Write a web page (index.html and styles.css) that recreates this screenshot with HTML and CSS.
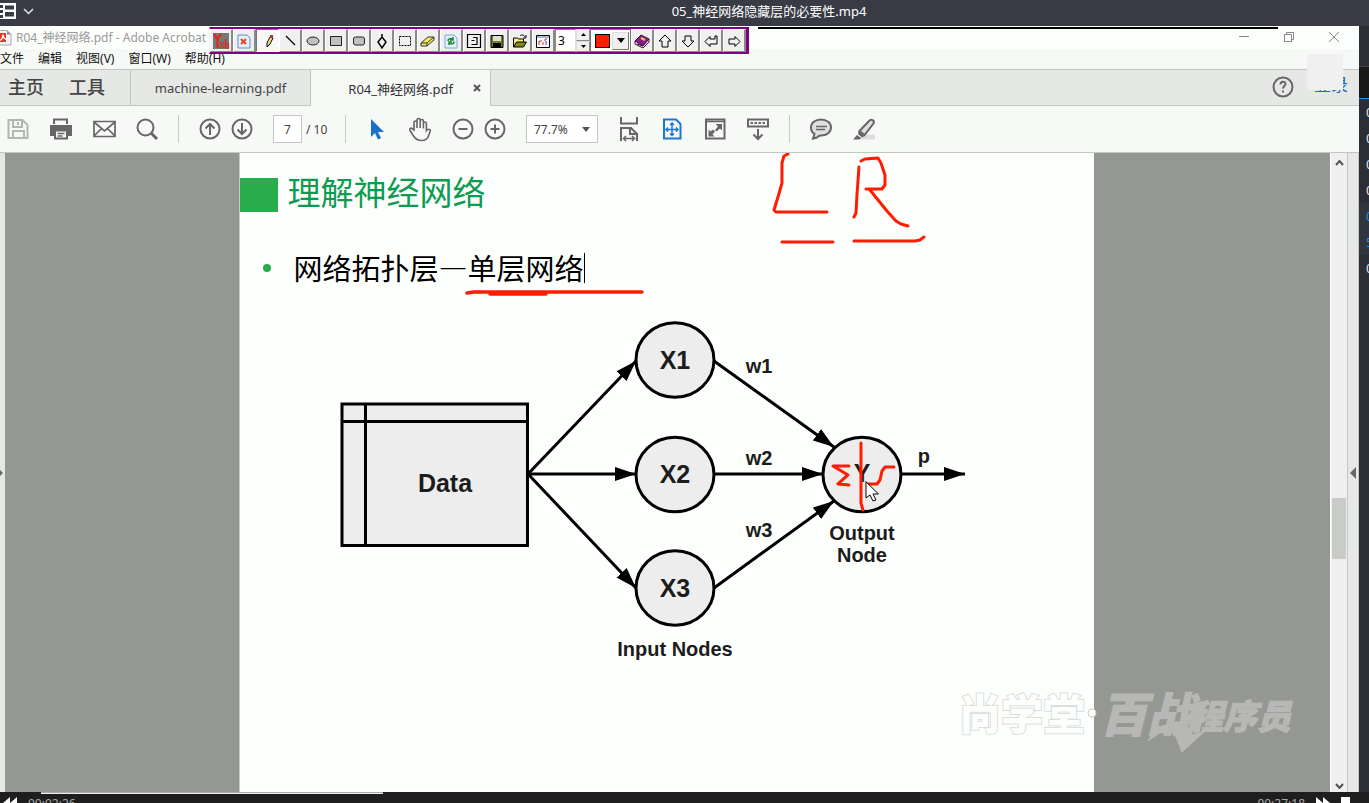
FILE: index.html
```html
<!DOCTYPE html>
<html lang="zh-CN">
<head>
<meta charset="utf-8">
<title>05_神经网络隐藏层的必要性.mp4</title>
<link rel="stylesheet" href="styles.css">
</head>
<body>
<header class="player-head">
  <button class="player-menu" aria-label="菜单">
    <svg width="34" height="18" viewBox="0 0 34 18"><path d="M0 1h16v16H0z" fill="#fff"/><path d="M-1 3h4v3h-4zM-1 8h4v3h-4zM-1 13h4v3h-4zM5 3.500h9v4H5zM5 10h9v4.500H5z" fill="#383b44"/><path d="M24 7l4.500 4.500L33 7" fill="none" stroke="#e6e6e6" stroke-width="1.500"/></svg>
  </button>
  <h1 class="player-title">05_神经网络隐藏层的必要性.mp4</h1>
</header>

<div class="stage">
  <main class="video">
    <div class="win-title">
      <svg class="pdf-icon" width="12" height="16" viewBox="0 0 12 16"><path d="M-2 .5H7l4 4V15H-2z" fill="#f4f4f4" stroke="#aaa"/><path d="M7 .5v4h4z" fill="#888"/><path d="M0 3h6v9H0z" fill="#e03a20"/><path d="M0 10.500C2.500 9 3 7 3 4.500c0 2.500 1 4 3.500 5" stroke="#fff" stroke-width="1.300"/></svg>
      <span class="win-name">R04_神经网络.pdf - Adobe Acrobat</span>
      <div class="win-buttons">
        <button aria-label="最小化"><svg width="12" height="12" viewBox="0 0 12 12"><path d="M1 5.500h10"/></svg></button>
        <button aria-label="还原"><svg width="12" height="12" viewBox="0 0 12 12"><path d="M1.500 3.500h7v7h-7zM3.500 3.500v-2h7v7h-2"/></svg></button>
        <button aria-label="关闭"><svg width="12" height="12" viewBox="0 0 12 12"><path d="M1 1l10 10M11 1L1 11"/></svg></button>
      </div>
      <span class="top-rule"></span>
    </div>

    <nav class="menus">
      <button>文件</button><button>编辑</button><button>视图(V)</button><button>窗口(W)</button><button>帮助(H)</button>
    </nav>

    <div class="tabs">
      <div class="home-tabs"><button>主页</button><button>工具</button></div>
      <button class="tab">machine-learning.pdf</button>
      <div class="tab tab-active"><button>R04_神经网络.pdf</button><button class="tab-close" aria-label="关闭标签"><svg width="8" height="8" viewBox="0 0 8 8"><path d="M1 1l6 6M7 1L1 7" stroke="#555" stroke-width="2"/></svg></button></div>
      <div class="tabs-end">
        <button class="help" aria-label="帮助"><svg width="22" height="22" viewBox="0 0 22 22" fill="none" stroke="#666" stroke-width="2"><circle cx="11" cy="11" r="9.500"/><path d="M8.500 8.500c0-3.500 5-3.500 5-.5 0 2-2.500 2-2.500 4.500M11 14.500v2"/></svg></button>
        <a class="login" href="#">登录</a>
      </div>
      <span class="patch"></span>
    </div>

    <div class="tools">
      <button aria-label="保存"><svg viewBox="0 0 24 24"><path d="M2.500 3h14l5 5v13h-19z" stroke="#b4b6b4"/><path d="M7 3v7h9V3M7 21v-7h11v7M12 5v3" stroke="#b4b6b4"/></svg></button>
      <button aria-label="打印"><svg viewBox="0 0 24 24"><path d="M5 7V2.500h13V7" /><path d="M1 8h22v11h-4v-5H5v5H1z" fill="#666" stroke="none"/><path d="M6 13.500h12v8H6z" fill="#f7f9f7"/><path d="M8.500 16.500h7M8.500 19h5" stroke-width="1.300"/></svg></button>
      <button aria-label="邮件"><svg viewBox="0 0 24 24"><path d="M2 4.500h21v15H2zM2 5l10.500 9L23 5M2 19l7.500-7.500M23 19l-7.500-7.500" stroke-width="1.700"/></svg></button>
      <button aria-label="搜索"><svg viewBox="0 0 24 24"><circle cx="10.500" cy="10.500" r="8"/><path d="M16 16l6 6" stroke-width="3"/></svg></button>
      <span class="sep"></span>
      <div class="pair">
        <button aria-label="上一页"><svg viewBox="0 0 24 24"><circle cx="12" cy="12" r="9.500"/><path d="M12 18V7M7.500 11.500L12 7l4.500 4.500"/></svg></button>
        <button aria-label="下一页"><svg viewBox="0 0 24 24"><circle cx="12" cy="12" r="9.500"/><path d="M12 6v11M7.500 12.500L12 17l4.500-4.500"/></svg></button>
      </div>
      <label class="pages"><input class="page-no" type="text" value="7" aria-label="页码"><span>/ 10</span></label>
      <span class="sep"></span>
      <button aria-label="选择"><svg viewBox="0 0 24 24"><path d="M6 2v18l4-4 3 6.500 3-1.500-3-6h6z" fill="#1a6fc9" stroke="none"/></svg></button>
      <button aria-label="手形"><svg viewBox="0 0 24 24"><path d="M6 13V5.500c0-2 3-2 3 0V11 3c0-2 3.200-2 3.200 0v8V4c0-2 3.200-2 3.200 0v7.500V6.500c0-2 3-2 3 0V13.500c1-1.500 4-2 4 .2L20.500 19c-1 3-3 4.500-7 4.500S7.500 22 5.500 19L2 13.500c-1-2 1-3 2.300-1.700z" stroke-width="1.600"/></svg></button>
      <div class="pair">
        <button aria-label="缩小"><svg viewBox="0 0 24 24"><circle cx="12" cy="12" r="9.500"/><path d="M7.500 12h9"/></svg></button>
        <button aria-label="放大"><svg viewBox="0 0 24 24"><circle cx="12" cy="12" r="9.500"/><path d="M7.500 12h9M12 7.500v9"/></svg></button>
      </div>
      <div class="zoom"><select aria-label="缩放"><option>77.7%</option></select></div>
      <button aria-label="适合宽度"><svg viewBox="0 0 24 24"><path d="M4 0v6.500h16V0M4 24V11h10l6 6v7M13 11v6h7" /><path d="M6.500 21.500h11M9 19l-2.500 2.500L9 24M15 19l2.500 2.500L15 24" stroke-width="1.500"/></svg></button>
      <button aria-label="适合页面"><svg viewBox="0 0 24 24" class="blue"><path d="M4 2.500h12l4.500 4.500v14.500H4z"/><path d="M12 6v12M6 12.500h12M10 8l2-2 2 2M10 16.500l2 2 2-2M8 10.500l-2 2 2 2M16 10.500l2 2-2 2" stroke-width="1.500"/></svg></button>
      <button aria-label="全屏"><svg viewBox="0 0 24 24"><path d="M3 2.500h18.500v19H3z"/><path d="M3 4.500h18" stroke-width="1.500"/><path d="M12.500 7H19v6.500l-2-2-3.500 3-1.500-1.500 3-3.500zM5.500 12.500l2 2L10 12.500l2 2-2.500 3 2 2h-6z" fill="#666" stroke="none"/></svg></button>
      <button aria-label="工具栏"><svg viewBox="0 0 24 24"><path d="M2 2.500h20v7H2zM12 12v10M7.500 17.500L12 22l4.500-4.500"/><path d="M4.500 6h15" stroke-dasharray="2.500 1.500"/></svg></button>
      <span class="sep"></span>
      <button aria-label="注释"><svg viewBox="0 0 24 24"><path d="M12 2.500c6 0 10 3.500 10 8s-4 8-10 8c-1.500 0-2.500 0-4 2l-4 1 1.500-4.500C3 15.500 2 13 2 10.500c0-4.500 4-8 10-8z" fill="#dedfde"/><path d="M7 9.500h11M7 12.500h9" stroke-width="1.300"/></svg></button>
      <button aria-label="荧光笔"><svg viewBox="0 0 24 24"><path d="M10 17.500h13v5H7z" fill="#ddd" stroke="none"/><path d="M7.500 14L17 4c2-2.500 6-.5 4.500 2.500L12.500 18z" fill="#dedfde"/><path d="M6.500 14l6 5-2.500 1.500-4-3.500zM5 18l4 3-1.500 1.500H1z" fill="#666" stroke="none"/></svg></button>
    </div>

    <section class="reader">
      <div class="pane-left"><svg width="3" height="10" viewBox="0 0 3 10"><path d="M0 2l3 3-3 3z" fill="#666"/></svg></div>
      <div class="viewer">
        <article class="slide">
          <h2 class="slide-title"><span>理解神经网络</span></h2>
          <ul class="points"><li><span class="typed">网络拓扑层—单层网络</span></li></ul>
          <svg class="diagram" viewBox="240 310 855 360">
            <defs><marker id="tip" viewBox="0 0 21 14" refX="21" refY="7" markerWidth="21" markerHeight="14" markerUnits="userSpaceOnUse" orient="auto"><path d="M0 0l21 7-21 7z"/></marker></defs>
            <g class="shape">
              <path d="M342 404h185.500v141.500H342zM365.500 404v141.500M342 421.500h185.500"/>
              <ellipse cx="675" cy="360" rx="39" ry="37.300"/><ellipse cx="675" cy="474.500" rx="39" ry="37.300"/><ellipse cx="675" cy="588" rx="39" ry="37.300"/><ellipse cx="862" cy="474.500" rx="39" ry="37.300"/>
            </g>
            <g class="edge">
              <path d="M528 474L636 361"/><path d="M528 474h108"/><path d="M528 474l108 114"/>
              <path d="M714 361l120 86"/><path d="M714 474h109"/><path d="M714 588l120-87"/><path d="M901 474h64"/>
            </g>
            <g class="node-text"><text x="445" y="492">Data</text><text x="675" y="369">X1</text><text x="675" y="483">X2</text><text x="675" y="597">X3</text><text x="862" y="482">Y</text></g>
            <g class="label-text"><text x="759" y="373">w1</text><text x="759" y="465">w2</text><text x="759" y="537">w3</text><text x="924" y="463">p</text><text x="862" y="540">Output</text><text x="862" y="562">Node</text><text x="675" y="656">Input Nodes</text></g>
          </svg>
          <svg class="ink" viewBox="240 153 855 639">
            <path d="M788 154l-4 2-2 7v20l-4 14-4 13 2 2h51M782 242h51M859 167l-2 28-1 18-2 4M861 161l4-2 13-1 3 5 4 12v10l-3 4h-16M870 190l17 21 9 10 5 3 7 2M854 241h61l5-1 4-3"/>
            <path d="M467 293l7-1h168M490 294h56" stroke-width="3.500"/>
            <path d="M861 443v60l2 7M849 466h-16l15 9-10 9 11 1M868 484h9l3-4 2-9 3-4h9"/>
            <path class="pointer" d="M866 482v16l4-3 3 6 3-1-3-6h5z"/>
          </svg>
        </article>
        <svg class="watermark" width="340" height="100" viewBox="955 670 340 100">
          <text class="wm-a" x="959" y="730">尚学堂</text><circle class="wm-dot" cx="1092" cy="713" r="4"/>
          <g class="wm-b">
            <text x="1100" y="732" font-size="47">百战</text><text x="1189" y="729" font-size="34">程序员</text>
            <path d="M1148 741l10-14 14-3zM1170 722h11l5 14 18-4-22 20z"/>
          </g>
        </svg>
      </div>
      <div class="scroll">
        <svg width="9" height="6" viewBox="0 0 9 6"><path d="M1 5l3.500-4L8 5"/></svg>
        <span class="thumb"></span>
        <svg width="9" height="6" viewBox="0 0 9 6"><path d="M1 1l3.500 4L8 1"/></svg>
      </div>
      <div class="pane-right"><svg width="6" height="12" viewBox="0 0 6 12"><path d="M6 0v12L0 6z" fill="#666"/></svg></div>
    </section>

    <div class="drawbar">
      <button aria-label="Yxb"><svg viewBox="0 0 18 18"><path d="M1 1h16v16H1z" fill="#777"/><path d="M2 2l3.500 5v9M9 2L5.500 7" stroke="#e8231b" stroke-width="2.200"/><path d="M8 10l4 6M12 10l-4 6M13.500 7v9h3v-4h-3" stroke="#e8231b" stroke-width="1.200"/></svg></button>
      <button aria-label="清除"><svg viewBox="0 0 18 18"><path d="M3 3h9l3 3v10H3z" fill="#e4efff" stroke="#5f8fd0"/><path d="M6 7l5 5M11 7l-5 5" stroke="#f04520" stroke-width="2"/></svg></button>
      <button class="pressed" aria-label="铅笔"><svg viewBox="0 0 18 18"><path d="M8 15V11l3-6 3 1-3 6z" fill="#eee08b" stroke="#000"/><path d="M11 3h3v3h-3z" fill="#a33"/></svg></button>
      <button aria-label="直线"><svg viewBox="0 0 18 18"><path d="M5 4l9 9" stroke="#000" stroke-width="1.300"/></svg></button>
      <button aria-label="椭圆"><svg viewBox="0 0 18 18"><ellipse cx="9" cy="9" rx="6" ry="4" fill="#c0c0c0" stroke="#222"/></svg></button>
      <button aria-label="矩形"><svg viewBox="0 0 18 18"><path d="M3.500 4.500h11v9h-11z" fill="#c0c0c0" stroke="#222"/></svg></button>
      <button aria-label="圆角矩形"><svg viewBox="0 0 18 18"><rect x="3.500" y="5" width="11" height="8" rx="2" fill="#c0c0c0" stroke="#222"/></svg></button>
      <button aria-label="多边形"><svg viewBox="0 0 18 18"><path d="M9 2v3l-4 5 4 6 4-6-4-5" stroke="#000" stroke-width="1.500"/></svg></button>
      <button aria-label="选区"><svg viewBox="0 0 18 18"><path d="M3.500 4.500h11v9h-11z" stroke="#000" stroke-dasharray="2 1"/></svg></button>
      <button aria-label="橡皮"><svg viewBox="0 0 18 18"><path d="M2 11l7-6h6v3l-7 6H2z" fill="#f2ec5c" stroke="#333"/><path d="M2 11h6l7-6M8 11v3" stroke="#333"/></svg></button>
      <button aria-label="刷新"><svg viewBox="0 0 18 18"><path d="M3 3h9l3 3v10H3z" fill="#e4efff" stroke="#7fa6dc"/><path d="M6 9c0-3 4-3 5-1M12 9.500c0 3-4 3-5 1M11 5v3H8M7 13v-3h3" stroke="#188a2a" stroke-width="1.500"/></svg></button>
      <button aria-label="撤销"><svg viewBox="0 0 18 18"><path d="M2.500 2.500h13v13h-13zM8 5.500h4v7H6.500M6.500 8.500h3" stroke="#000" stroke-width="1.200"/></svg></button>
      <button aria-label="保存图片"><svg viewBox="0 0 18 18"><path d="M3 3.500h12v12H3z" fill="#777b22" stroke="#000"/><path d="M5 4h8v5H5z" fill="#ddd"/><path d="M5 11h8v4H5z" fill="#000"/></svg></button>
      <button aria-label="打开"><svg viewBox="0 0 18 18"><path d="M2.500 15V6h4l1 1h5v3" fill="#f2ec7c" stroke="#000"/><path d="M2.500 15l3-5h10l-3 5z" fill="#85851d" stroke="#000"/><path d="M9 4c2-2 4-1 5 1M15 3v3h-3" stroke="#000"/></svg></button>
      <button aria-label="窗口"><svg viewBox="0 0 18 18"><path d="M2.500 3.500h13v12h-13z" fill="#fff" stroke="#000"/><path d="M3 5h12" stroke="#47a"/><path d="M5 13V9h3M9 13v-3M11 9V7h2" stroke="#c33"/><path d="M12 13V9" stroke="#33c"/></svg></button>
      <input class="width-no" type="text" value="3" aria-label="线宽">
      <div class="spin"><button aria-label="增加"><svg width="5" height="3" viewBox="0 0 5 3"><path d="M0 3l2.500-3L5 3z" fill="#000"/></svg></button><button aria-label="减少"><svg width="5" height="3" viewBox="0 0 5 3"><path d="M0 0l2.500 3L5 0z" fill="#000"/></svg></button></div>
      <div class="ink-color"><span class="swatch"></span><button aria-label="颜色"><svg width="8" height="5" viewBox="0 0 8 5"><path d="M0 0h8L4 5z" fill="#000"/></svg></button></div>
      <button aria-label="图书"><svg viewBox="0 0 18 18"><path d="M2 9l6-6 8 4-6 7z" fill="#8c1a8c" stroke="#401040"/><path d="M2 9v3l8 4 6-6V7M4 12l6 2" stroke="#301030"/><path d="M8 6l4 2" stroke="#f0d030" stroke-width="2"/></svg></button>
      <button aria-label="上"><svg viewBox="0 0 18 18"><path d="M9 3l6 6h-3v6H6V9H3z" stroke="#000"/></svg></button>
      <button aria-label="下"><svg viewBox="0 0 18 18"><path d="M9 15l6-6h-3V4H6v5H3z" stroke="#000"/></svg></button>
      <button aria-label="左"><svg viewBox="0 0 18 18"><path d="M3 9.500l5-5V7h5V4h2v8H8v2.500z" stroke="#000"/></svg></button>
      <button aria-label="右"><svg viewBox="0 0 18 18"><path d="M15 9.500l-5-5V7H4v5h6v2.500z" stroke="#000"/></svg></button>
    </div>
  </main>

  <aside class="playlist">
    <div class="pl-head"></div>
    <div class="pl-tab"></div>
    <ul class="pl-list"><li>0</li><li>0</li><li>0</li><li>0</li><li class="now">0<br>5</li><li>0</li></ul>
  </aside>
</div>

<footer class="player-foot">
  <span class="progress"></span>
  <div class="controls">
    <button aria-label="后退"><svg width="14" height="12" viewBox="0 0 14 12"><path d="M7 0v12L0 6zM14 0v12L7 6z" fill="#fff"/></svg></button>
    <time>00:02:26</time>
    <time class="total">00:27:18</time>
    <button aria-label="快进"><svg width="14" height="12" viewBox="0 0 14 12"><path d="M0 0v12l7-6zM7 0v12l7-6z" fill="#fff"/></svg></button>
    <button aria-label="停止"><svg width="9" height="12" viewBox="0 0 9 12"><path d="M0 0h9v12H0z" fill="#fff"/></svg></button>
  </div>
</footer>
</body>
</html>
```
FILE: styles.css
```css
* { box-sizing: border-box; }
body {
  margin: 0;
  height: 100vh;
  display: flex;
  flex-direction: column;
  overflow: hidden;
  background: #1e1e1e;
  font-family: "Noto Sans", "Noto Sans CJK SC", sans-serif;
  font-size: 12px;
  color: #222;
}
button, input, select { font: inherit; color: inherit; margin: 0; padding: 0; border: 0; background: none; }
button { display: inline-flex; align-items: center; justify-content: center; white-space: nowrap; }
svg { display: block; fill: none; }
ul { margin: 0; padding: 0; list-style: none; }

.player-head { display: flex; align-items: center; height: 26px; flex: none; background: #383b44; }
.player-menu { width: 169px; padding-bottom: 4px; justify-content: flex-start; }
.player-title { flex: 1; margin: 0; padding-bottom: 4px; text-align: center; font-size: 13px; line-height: 20px; font-weight: 400; color: #fff; }

.stage { flex: 1; min-height: 0; display: flex; }
.video { position: relative; flex: 1; min-width: 0; display: flex; flex-direction: column; background: #f7f9f7; }

.win-title { position: relative; display: flex; align-items: center; height: 23px; flex: none; background: #fdfffd; }
.pdf-icon { margin-right: 4px; }
.win-name { flex: 1; font-size: 12px; line-height: 22px; color: #999; white-space: nowrap; }
.win-buttons { display: flex; padding-right: 3px; }
.win-buttons button { width: 45px; height: 20px; padding-bottom: 2px; }
.win-buttons svg { stroke: #888; }
.top-rule { position: absolute; top: 1px; left: 758px; right: 81px; height: 2px; background: #000; }

.menus { display: flex; gap: 14px; height: 20px; flex: none; padding-bottom: 2px; color: #111; }

.tabs { position: relative; display: flex; height: 37px; flex: none; background: #e6e8e6; border-top: 1px solid #c4c6c4; box-shadow: inset 0 -1px #c4c6c4; }
.home-tabs { display: flex; gap: 25px; width: 131px; padding: 0 0 4px 8px; border-right: 1px solid #c4c6c4; font-size: 18px; font-weight: 500; color: #444; }
.tab { width: 180px; border-right: 1px solid #c4c6c4; font-size: 13px; color: #444; }
.tab-active { display: flex; align-items: center; justify-content: flex-end; gap: 20px; padding-right: 9px; background: #f7f9f7; color: #333; }
.tabs-end { display: flex; align-items: center; gap: 20px; margin-left: auto; padding: 0 11px 2px 0; }
.login { font-size: 17px; line-height: 30px; padding-bottom: 4px; color: #2a67b0; text-decoration: none; }
.patch { position: absolute; top: -16px; right: 16px; width: 36px; height: 36px; background: #eff0ef; }

.tools { display: flex; align-items: center; gap: 19px; height: 47px; flex: none; padding-left: 6px; border-bottom: 1px solid #c4c6c4; color: #444; }
.tools button, .tools button svg { width: 24px; height: 24px; flex: none; }
.tools svg { stroke: #666; stroke-width: 2; overflow: visible; }
.tools .blue { stroke: #1a78d0; }
.sep { width: 1px; height: 28px; background: #c8cac8; }
.pair { display: flex; gap: 8px; }
.pages { display: flex; align-items: center; gap: 4px; width: 53px; white-space: nowrap; }
.page-no { width: 29px; height: 28px; border: 1px solid #c4c6c4; background: #fff; text-align: center; }
.zoom { position: relative; width: 72px; }
.zoom select { width: 100%; height: 28px; padding: 0 7px; appearance: none; border: 1px solid #c4c6c4; background: #fff; }
.zoom::after { content: ""; position: absolute; right: 8px; top: 12px; border: 4px solid transparent; border-top: 5px solid #555; border-bottom: 0; }

.reader { flex: 1; min-height: 0; display: flex; }
.pane-left { display: flex; align-items: center; width: 5px; background: #e6e8e6; }
.viewer { position: relative; flex: 1; min-width: 0; display: flex; justify-content: center; padding-right: 2px; background: #959793; overflow: hidden; }
.slide { position: relative; width: 64.7%; background: #fdfffd; border-left: 1px solid #c8cac8; padding-top: 25px; }
.slide-title { display: flex; align-items: center; gap: 10px; margin: 0; height: 34px; font-family: "Noto Sans CJK SC", sans-serif; font-size: 33px; line-height: 34px; font-weight: 400; color: #0c9c50; }
.slide-title::before { content: ""; width: 38px; height: 34px; background: #2aac4c; }
.slide-title span { padding-bottom: 8px; }
.points { padding: 38px 0 24px 23px; }
.points li { display: flex; align-items: center; gap: 23px; height: 36px; font-family: "Noto Sans CJK SC", sans-serif; font-size: 29px; line-height: 36px; color: #000; }
.points li::before { content: ""; width: 8px; height: 8px; border-radius: 50%; background: #2aac4c; }
.typed { height: 30px; line-height: 28px; border-right: 1px solid #000; }
.diagram { width: 100%; font-family: "Liberation Sans", sans-serif; font-weight: 700; }
.shape { fill: #ecedec; stroke: #000; stroke-width: 3; }
.edge { stroke: #000; stroke-width: 3; }
.edge path { marker-end: url(#tip); }
.diagram marker path { fill: #000; }
.diagram text { fill: #1c1c1c; text-anchor: middle; }
.node-text { font-size: 25px; }
.label-text { font-size: 20px; }
.ink { position: absolute; top: 0; left: 0; width: 100%; stroke: #ff1c00; stroke-width: 3; stroke-linecap: round; stroke-linejoin: round; }
.ink .pointer { fill: #fff; stroke: #000; stroke-width: 1; }
.watermark { position: absolute; right: 35px; bottom: 22px; font-family: "Noto Sans CJK SC", sans-serif; font-weight: 900; }
.wm-a { font-size: 42px; fill: #fdfffd; stroke: #dcdedc; stroke-width: 2; paint-order: stroke; }
.wm-dot { fill: #fff; stroke: #ccc; }
.wm-b { fill: #fff; stroke: #fff; stroke-width: 1; font-style: italic; opacity: .32; }

.scroll { display: flex; flex-direction: column; align-items: center; width: 18px; padding: 7px 1px 3px; background: #eeefee; border-left: 1px solid #fff; border-right: 1px solid #c4c6c4; }
.scroll svg { flex: none; stroke: #555; stroke-width: 2; }
.thumb { width: 100%; height: 61px; margin: auto 0 224px; background: #c9cbc9; }
.pane-right { display: flex; align-items: center; justify-content: center; width: 11px; background: #e6e8e6; border-right: 1px solid #c4c6c4; }

.drawbar { position: absolute; top: 1px; left: 209px; display: flex; height: 27px; border: 2px solid #800080; border-left: 1px solid #eee; border-right: 3px solid #800080; background: #f0f0f0; }
.drawbar > button { width: 23px; background: #f0f0f0; border: 1px solid #fff; border-right: 2px solid #8a8a8a; border-bottom: 1px solid #8a8a8a; }
.drawbar > button svg { width: 18px; height: 18px; flex: none; }
.drawbar > .pressed { background: #f8f8f8; border: 1px solid #777; border-right-color: #fff; border-bottom-color: #fff; }
.width-no { width: 21px; padding: 0 2px; background: #fff; border: 1px solid #888; border-right-color: #ddd; color: #000; }
.spin { display: flex; flex-direction: column; width: 14px; }
.spin button { flex: 1; background: #f0f0f0; border: 1px solid #ddd; border-right-color: #888; border-bottom-color: #888; }
.ink-color { display: flex; align-items: center; justify-content: space-between; width: 41px; padding: 1px 1px 1px 4px; background: #fff; border: 1px solid #777; }
.swatch { width: 15px; height: 14px; background: #ff1c00; border: 1px solid #000; }
.ink-color button { width: 17px; height: 18px; background: #f0f0f0; border: 1px solid #ddd; border-right-color: #777; border-bottom-color: #777; }

.playlist { width: 10px; background: #2c2d35; overflow: hidden; }
.pl-head { height: 40px; }
.pl-tab { height: 33px; background: #181818; border-top: 1px solid #444; border-bottom: 1px solid #1a8fe8; }
.pl-list { font-size: 13px; line-height: 26px; color: #d8e4f4; }
.pl-list li { padding-left: 7px; }
.pl-list .now { background: #31353d; color: #1a8fe8; }

.player-foot { position: relative; height: 11px; flex: none; background: #1e1e1e; overflow: hidden; }
.progress { position: absolute; top: 0; left: 3%; width: 25%; height: 2px; background: #eceeec; border-top: 1px solid #aaa; }
.controls { display: flex; align-items: center; gap: 11px; height: 22px; padding: 0 19px 0 3px; color: #aaa; font-size: 12px; }
.total { margin-left: auto; }
```
